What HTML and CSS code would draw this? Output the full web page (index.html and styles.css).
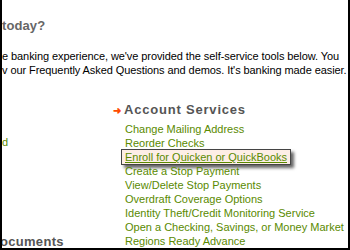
FILE: index.html
```html
<!DOCTYPE html>
<html lang="en">
<head>
  <meta charset="UTF-8" />
  <title>Customer Service</title>
  <link rel="stylesheet" href="styles.css">
</head>
<body>
  <div class="frame">
    <h1 class="title">today?</h1>
    <p class="intro">e banking experience, we've provided the self-service tools below. You<br>v our Frequently Asked Questions and demos. It's banking made easier.</p>

    <div class="columns">
      <div class="col left">
        <ul class="links side">
          <li><a href="#">d</a></li>
        </ul>
        <h2 class="section">ocuments</h2>
      </div>

      <div class="col right">
        <h2 class="section"><span class="arrow">&#10140;</span>Account Services</h2>
        <ul class="links">
          <li><a href="#">Change Mailing Address</a></li>
          <li><a href="#">Reorder Checks</a></li>
          <li><a href="#" class="hover">Enroll for Quicken or QuickBooks</a></li>
          <li><a href="#">Create a Stop Payment</a></li>
          <li><a href="#">View/Delete Stop Payments</a></li>
          <li><a href="#">Overdraft Coverage Options</a></li>
          <li><a href="#">Identity Theft/Credit Monitoring Service</a></li>
          <li><a href="#">Open a Checking, Savings, or Money Market</a></li>
          <li><a href="#">Regions Ready Advance</a></li>
        </ul>
      </div>
    </div>
  </div>
</body>
</html>
```

FILE: styles.css
```css
html, body {
  margin: 0;
  height: 100%;
}
body {
  font-family: "Liberation Sans", Arial, sans-serif;
  background: #fff;
  color: #000;
  overflow: hidden;
}
.frame {
  box-sizing: border-box;
  width: 350px;
  height: 250px;
  border-left: 2px solid #000;
  border-right: 2px solid #000;
  border-bottom: 2px solid #000;
  padding-top: 18px;
  overflow: hidden;
}
.title {
  margin: 0;
  font-size: 13px;
  line-height: 16px;
  font-weight: bold;
  color: #666;
  letter-spacing: 0.1px;
}
.intro {
  margin: 15px 0 0;
  font-size: 11px;
  line-height: 14px;
  letter-spacing: -0.08px;
  white-space: nowrap;
}
.columns {
  display: grid;
  grid-template-columns: 111px 1fr;
  margin-top: 25px;
}
.section {
  margin: 0;
  font-size: 13px;
  line-height: 16px;
  font-weight: bold;
  color: #555;
  letter-spacing: 0.8px;
}
.left .section {
  margin-top: 85px;
  margin-left: -2px;
  letter-spacing: 0.3px;
}
.arrow {
  display: inline-block;
  width: 11px;
  color: #ff4a00;
  font-size: 10px;
  font-weight: bold;
  letter-spacing: 0;
}
.links {
  list-style: none;
  margin: 3px 0 0 12px;
  padding: 0;
  font-size: 11px;
  line-height: 14px;
}
.links a {
  color: #5a8a00;
  text-decoration: none;
}
.links a.hover {
  text-decoration: underline;
  background: #fdeee6;
  border: 1px solid #444;
  padding: 1px 3px;
  margin: 0 -4px;
  box-shadow: 3px 3px 3px #666;
}
.side {
  margin: 33px 0 0 0;
}
```
